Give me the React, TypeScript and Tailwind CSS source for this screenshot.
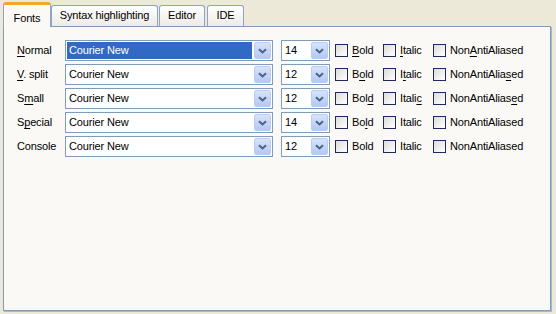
const rows = [
  { label: "Normal", key: 0, size: "14", selected: true, bold: 0, italic: 0, naa: 3 },
  { label: "V. split", key: 0, size: "12", selected: false, bold: 1, italic: 1, naa: 11 },
  { label: "Small", key: 1, size: "12", selected: false, bold: 3, italic: 5, naa: 12 },
  { label: "Special", key: 1, size: "14", selected: false, bold: 2, italic: -1, naa: -1 },
  { label: "Console", key: -1, size: "12", selected: false, bold: -1, italic: -1, naa: -1 },
];

function Mnemonic({ text, at }: { text: string; at: number }) {
  if (at < 0) return <span>{text}</span>;
  return (
    <span>
      {text.slice(0, at)}
      <span className="underline underline-offset-[2px]">{text[at]}</span>
      {text.slice(at + 1)}
    </span>
  );
}

function DropButton() {
  return (
    <div className="w-[17px] h-[17px] my-[1px] mr-[1px] shrink-0 rounded-[2px] border border-[#B9CDF6] bg-gradient-to-b from-[#D6E3FC] to-[#B3C8F5] flex items-center justify-center">
      <svg width="9" height="6" viewBox="0 0 9 6">
        <path d="M1 1.2 L4.5 4.5 L8 1.2" fill="none" stroke="#4D6185" strokeWidth="2" />
      </svg>
    </div>
  );
}

function Combo({ value, width, selected }: { value: string; width: string; selected?: boolean }) {
  return (
    <div className={`${width} h-[21px] shrink-0 flex items-stretch border border-[#7F9DB9] bg-white`}>
      <div className="flex-1 flex p-[1px] pr-[2px]">
        <div
          className={`flex-1 flex items-center pl-[2px] ${selected ? "bg-[#316AC5] text-white" : "text-black"}`}
        >
          {value}
        </div>
      </div>
      <DropButton />
    </div>
  );
}

function Check({ text, at, width }: { text: string; at: number; width: string }) {
  return (
    <div className={`${width} shrink-0 flex items-center gap-[4px]`}>
      <div className="w-[13px] h-[13px] border border-[#1C2A5E] bg-gradient-to-br from-[#DCDCD7] to-white" />
      <Mnemonic text={text} at={at} />
    </div>
  );
}

export default function App() {
  return (
    <div
      className="w-[556px] h-[314px] bg-[#ECE9D8] pt-[2px] pl-[3px] text-[11px] tracking-[-0.15px] text-black"
      style={{ fontFamily: '"Liberation Sans", Arial, sans-serif' }}
    >
      {/* Tabs */}
      <div className="flex items-end h-[24px]">
        <div className="relative z-10 w-[48px] h-[25px] -mb-px rounded-t-[3px] border-t-[3px] border-t-[#F4A72D] border-x border-x-[#8FA4C6] bg-[#FAF9F5] flex justify-center pt-[5px]">
          Fonts
        </div>
        <div className="w-[107px] h-[21px] rounded-t-[3px] border border-b-0 border-[#8FA4C6] bg-gradient-to-b from-white to-[#ECEBE5] flex items-center justify-center pb-[1px]">
          Syntax highlighting
        </div>
        <div className="ml-[1px] w-[46px] h-[21px] rounded-t-[3px] border border-b-0 border-[#8FA4C6] bg-gradient-to-b from-white to-[#ECEBE5] flex items-center justify-center pb-[1px]">
          Editor
        </div>
        <div className="ml-[2px] w-[37px] h-[21px] rounded-t-[3px] border border-b-0 border-[#8FA4C6] bg-gradient-to-b from-white to-[#ECEBE5] flex items-center justify-center pb-[1px]">
          IDE
        </div>
      </div>

      {/* Panel */}
      <div className="w-[548px] h-[285px] border border-[#7F9DB9] bg-[#FAF9F5] shadow-[1px_1px_0_#A9B7CF] pt-[13px] pl-[13px] flex flex-col gap-[3px]">
        {rows.map((r) => (
          <div key={r.label} className="flex items-center h-[21px]">
            <div className="w-[48px] shrink-0">
              <Mnemonic text={r.label} at={r.key} />
            </div>
            <Combo value="Courier New" width="w-[208px]" selected={r.selected} />
            <div className="w-[8px] shrink-0" />
            <Combo value={r.size} width="w-[49px]" />
            <div className="w-[5px] shrink-0" />
            <Check text="Bold" at={r.bold} width="w-[48px]" />
            <Check text="Italic" at={r.italic} width="w-[50px]" />
            <Check text="NonAntiAliased" at={r.naa} width="w-[100px]" />
          </div>
        ))}
      </div>
    </div>
  );
}
